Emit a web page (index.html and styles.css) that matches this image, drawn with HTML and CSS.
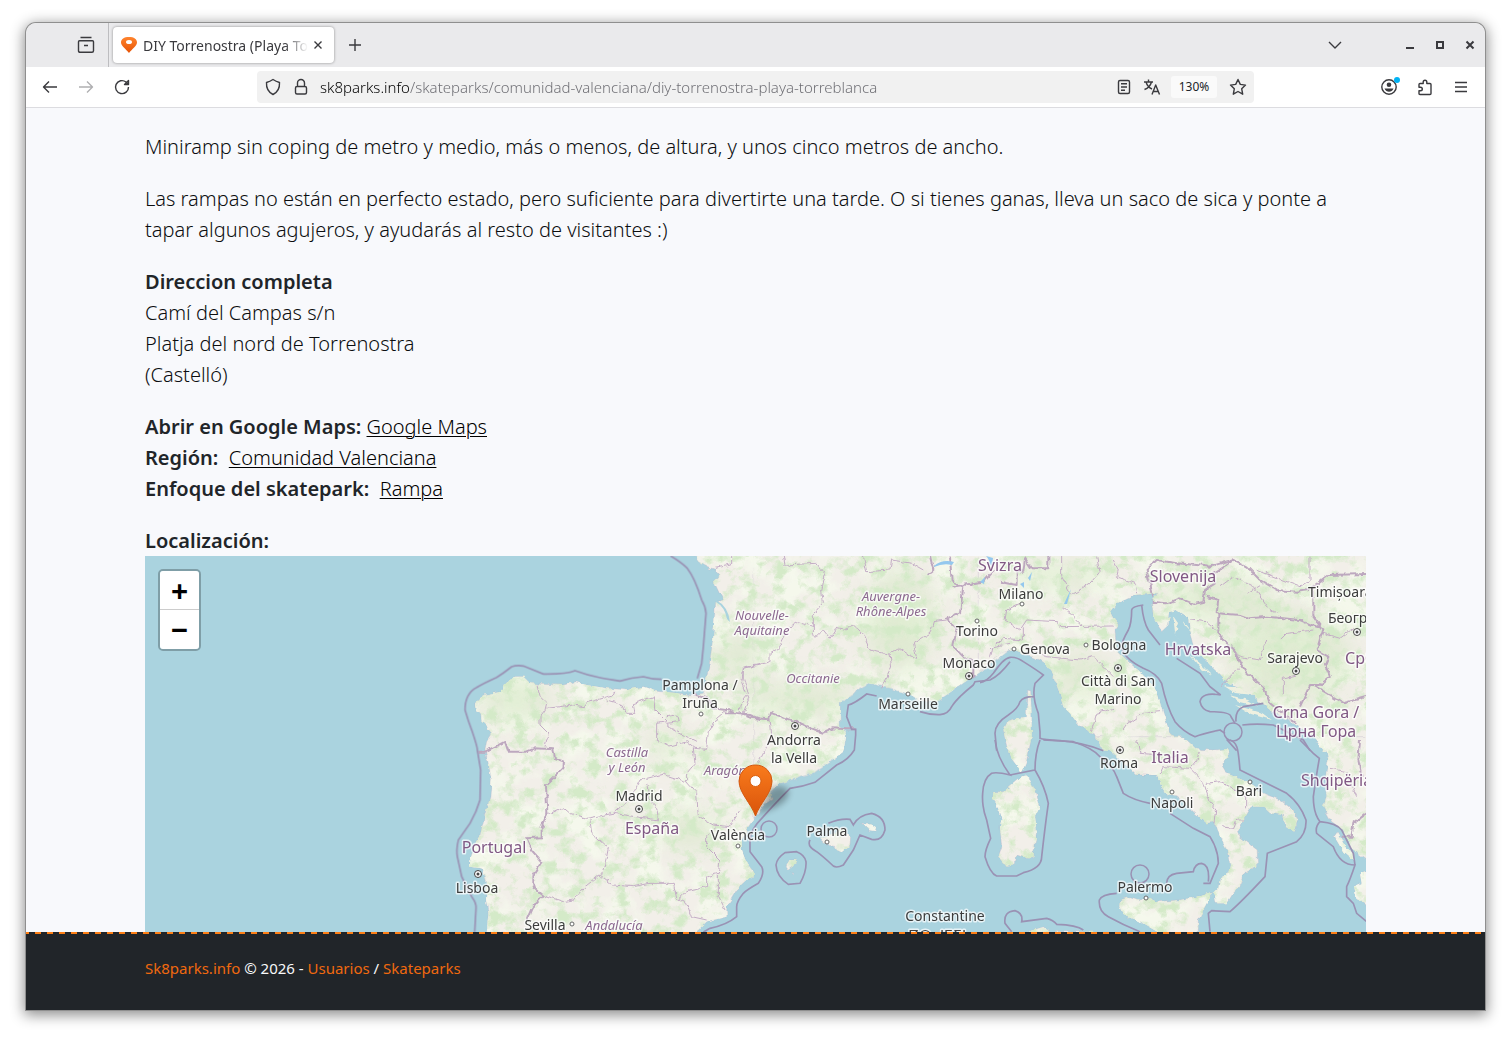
FILE: index.html
```html
<!DOCTYPE html>
<html lang="es">
<head>
<meta charset="utf-8">
<meta name="viewport" content="width=device-width, initial-scale=1">
<title>DIY Torrenostra (Playa Torreblanca)</title>
<link rel="stylesheet" href="styles.css">
</head>
<body>
<div class="window">
  <header class="tabbar">
    <button class="icon-btn recent" aria-label="Firefox View"><svg width="18" height="18" viewBox="0 0 18 18"><path d="M3.500 1.500h11M2.500 4.800h13q1 0 1 1v9q0 1.500-1.500 1.500H3q-1.500 0-1.500-1.500v-9q0-1 1-1zM7 9.500h4"/></svg></button>
    <div class="tab">
      <svg class="favicon" width="18" height="18" viewBox="0 0 18 18"><defs><linearGradient id="fav" x2="0" y2="1"><stop stop-color="#ff842e"/><stop offset="1" stop-color="#e65305"/></linearGradient></defs><path fill="url(#fav)" d="M9 1C14 1 17 3 17 6.500C17 10 12 13 9 17C6 13 1 10 1 6.500C1 3 4 1 9 1z"/><ellipse cx="9" cy="6" rx="3" ry="2" fill="#fff"/></svg>
      <span class="tab-title">DIY Torrenostra (Playa Torreblanca)</span>
      <button class="icon-btn tab-close" aria-label="Cerrar pestaña"><svg width="10" height="10" viewBox="0 0 10 10"><path d="M1.500 1.500l7 7M8.500 1.500l-7 7"/></svg></button>
    </div>
    <button class="icon-btn new-tab" aria-label="Nueva pestaña"><svg width="14" height="14" viewBox="0 0 14 14"><path d="M7 1v12M1 7h12"/></svg></button>
    <button class="icon-btn tab-list" aria-label="Listar pestañas"><svg width="14" height="14" viewBox="0 0 14 14"><path d="M1 4l6 6 6-6"/></svg></button>
    <div class="window-controls">
      <button class="icon-btn" aria-label="Minimizar"><svg width="10" height="10" viewBox="0 0 10 10"><path d="M1 8h8"/></svg></button>
      <button class="icon-btn" aria-label="Maximizar"><svg width="10" height="10" viewBox="0 0 10 10"><path d="M2 2h6v6H2z"/></svg></button>
      <button class="icon-btn" aria-label="Cerrar"><svg width="10" height="10" viewBox="0 0 10 10"><path d="M1.500 1.500l7 7M8.500 1.500l-7 7"/></svg></button>
    </div>
  </header>
  <nav class="toolbar" aria-label="Navegación">
    <div class="nav-buttons">
      <button class="icon-btn" aria-label="Atrás"><svg width="18" height="18" viewBox="0 0 18 18"><path d="M16 9H2.500M8 3.500L2.500 9 8 14.500"/></svg></button>
      <button class="icon-btn" aria-label="Adelante" disabled><svg width="18" height="18" viewBox="0 0 18 18"><path d="M2 9h13.500M10 3.500l5.500 5.500-5.500 5.500"/></svg></button>
      <button class="icon-btn" aria-label="Recargar"><svg width="18" height="18" viewBox="0 0 18 18"><path d="M15.500 9A6.500 6.500 0 1 1 13 4l2 2M15.500 2.500v4h-4z"/></svg></button>
    </div>
    <div class="urlbar">
      <svg width="18" height="18" viewBox="0 0 18 18"><path d="M9 1.500Q12 3.500 15.500 4.500Q16 13 9 16.500Q2 13 2.500 4.500Q6 3.500 9 1.500z"/></svg>
      <svg width="18" height="18" viewBox="0 0 18 18"><path d="M5.500 8V5a3.500 3.500 0 0 1 7 0v3M5 8.500h8q1.500 0 1.500 1.500v4.500q0 1.500-1.500 1.500H5q-1.500 0-1.500-1.500V10q0-1.500 1.500-1.500z"/></svg>
      <input class="url" type="text" aria-label="Dirección" value="sk8parks.info/skateparks/comunidad-valenciana/diy-torrenostra-playa-torreblanca">
      <button class="icon-btn" aria-label="Modo lectura"><svg width="18" height="18" viewBox="0 0 18 18"><path d="M5 2.500h8q1.500 0 1.500 1.500v10q0 1.500-1.500 1.500H5q-1.500 0-1.500-1.500V4q0-1.500 1.500-1.500zM6 5.700h6M6 9h6M6 12.200h4"/></svg></button>
      <button class="icon-btn" aria-label="Traducir"><svg width="18" height="18" viewBox="0 0 18 18"><path d="M1 4h9M5.500 1.500V4M8.500 4Q7 9.500 1.500 11.500M3 4Q4.500 9 9 11M9 16.500l3.700-9.500 3.800 9.500M10.200 13.500h5"/></svg></button>
      <button class="zoom-level">130%</button>
      <button class="icon-btn" aria-label="Añadir a marcadores"><svg width="18" height="18" viewBox="0 0 18 18"><path d="M9 1.500l2.300 4.900 5.200.7-3.800 3.700 1 5.400L9 13.500l-4.700 2.700 1-5.400L1.500 7.100l5.200-.7z"/></svg></button>
    </div>
    <div class="tools">
      <button class="icon-btn account" aria-label="Cuenta"><svg width="18" height="18" viewBox="0 0 18 18"><circle cx="9" cy="9" r="7.200"/><circle class="solid" cx="9" cy="6.700" r="2.300"/><path class="solid" d="M4.500 10.500h9Q12 13.800 9 13.800T4.500 10.500z"/><circle class="badge" cx="17" cy="2" r="3"/></svg></button>
      <button class="icon-btn" aria-label="Extensiones"><svg width="18" height="18" viewBox="0 0 18 18"><path d="M3 6.500q0-1 1-1h3.200V4a1.800 1.800 0 0 1 3.600 0v1.500H14q1 0 1 1v9q0 1-1 1H4q-1 0-1-1v-2.700h1.500a1.800 1.800 0 0 0 0-3.600H3z"/></svg></button>
      <button class="icon-btn" aria-label="Menú"><svg width="18" height="18" viewBox="0 0 18 18"><path d="M3 4.500h12M3 9h12M3 13.500h12"/></svg></button>
    </div>
  </nav>

  <main class="page">
    <p>Miniramp sin coping de metro y medio, más o menos, de altura, y unos cinco metros de ancho.</p>
    <p>Las rampas no están en perfecto estado, pero suficiente para divertirte una tarde. O si tienes ganas, lleva un saco de sica y ponte a tapar algunos agujeros, y ayudarás al resto de visitantes :)</p>
    <p><strong>Direccion completa</strong><br>Camí del Campas s/n<br>Platja del nord de Torrenostra<br>(Castelló)</p>
    <p><strong>Abrir en Google Maps:</strong> <a href="#mapa">Google Maps</a><br><strong>Región:</strong>&nbsp; <a href="#region">Comunidad Valenciana</a><br><strong>Enfoque del skatepark:</strong>&nbsp; <a href="#rampa">Rampa</a></p>
    <strong class="map-title">Localización:</strong>
    <section class="map" id="mapa" aria-label="Localización">
      <svg class="tiles" viewBox="145 556 1221 376" preserveAspectRatio="xMidYMid slice">
        <defs>
          <path id="land-a" transform="translate(440 550) scale(.33333)" d="M765 18L775 35 800 50 825 58 840 75 822 95 838 130 850 150 828 155 825 180 820 260 810 330 797 395 790 430 760 435 700 428 650 424 610 410 560 420 500 415 440 405 405 395 370 405 300 403 270 400 250 380 225 380 195 400 185 425 130 435 105 460 105 475 122 490 125 515 140 530 155 550 140 575 135 600 145 640 155 690 150 740 130 810 120 860 100 890 88 950 125 955 135 990 140 1010 138 1050 145 1090 140 1150 765 1150 800 1115 860 1100 860 1070 890 1020 945 970 920 940 905 900 905 870 925 830 947 800 965 780 965 0 765 0Z"/>
          <path id="land-b" transform="translate(690 550) scale(.33333)" d="M190 0V805L230 755 250 745 240 730 270 700 370 670 460 605 470 545 450 530 450 460 480 435 540 400 600 415 650 430 690 455 740 455 790 420 840 385 870 365 920 330 965 295V0Z"/>
          <path id="land-c" transform="translate(980 550) scale(.33333)" d="M-5 0V365L30 340 60 310 100 298 140 315 190 335 215 365 235 420 250 470 270 490 300 530 340 550 370 602H625L570 550 550 490 530 420 480 365 440 330 410 300 405 240 415 225 400 205 390 185 410 160 470 135 530 130 515 160 520 200 545 245 565 225 570 185 590 180 625 205 630 250 640 290 690 345 740 395 820 440 870 480 940 520 1000 560 1032 602H1165V0Z"/>
          <path id="land-d" transform="translate(980 740) scale(.33333)" d="M348 -10L355 0 385 30 440 75 470 105 530 105 545 140 560 165 590 170 610 185 640 215 680 250 705 245 720 290 740 330 750 375 745 400 720 415 715 445 700 460 705 490 740 490 760 460 780 440 790 400 832 378 832 330 780 290 775 270 790 240 815 200 850 200 870 220 910 225 915 260 943 275 953 240 940 210 900 180 850 160 800 125 740 100 725 75 748 40 740 28 700 30 650 28 610 -10ZM1030 -10L1045 60 1035 120 1040 170 1030 200 1055 245 1090 270 1100 300 1130 340 1165 365V-10Z
            M130 105L150 120 170 160 180 200 165 230 170 270 160 355 140 355 110 345 105 375 80 380 55 350 65 320 60 260 65 240 50 195 38 180 40 155 70 155 100 130Z
            M420 480L450 470 480 480 500 470 530 485 600 480 650 470 697 455 680 490 655 540 655 580H540L480 545 430 525 418 500ZM130 580L190 560 210 575ZM200 575H340V585H200Z
            M1060 285L1075 280 1090 310 1120 345 1125 365 1090 335ZM1140 400L1165 390V500L1125 470 1120 440 1145 430Z"/>
          <path id="islands" transform="translate(690 550) scale(.33333)" d="M1010 420L1022 422 1025 500 1025 560 1010 635 995 665 960 620 945 570 940 540 950 520 985 505 1010 500ZM390 868L430 850 465 835 482 860 480 885 455 907 440 900 435 890 410 885ZM515 820L540 820 558 832 555 843 535 840ZM285 945L305 930 320 930 310 948 295 960ZM303 965L312 968 308 978Z"/>
          <path id="dalmatia" d="M1173 616L1178 623 1176 634 1180 641 1175 632ZM1182 620L1191 632 1185 626ZM1190 655L1202 665 1212 675 1200 668ZM1224 686L1240 688 1252 695 1235 693ZM1229 695L1248 700 1258 706 1240 702ZM1235 705L1262 713 1272 720 1250 714Z"/>
          <clipPath id="land-clip"><use href="#land-a"/><use href="#land-b"/><use href="#land-c"/><use href="#land-d"/><use href="#islands"/></clipPath>
          <filter id="ragged" x="0" y="0" width="100%" height="100%"><feTurbulence type="fractalNoise" baseFrequency=".16" numOctaves="2" seed="4"/><feDisplacementMap in="SourceGraphic" scale="5" xChannelSelector="R" yChannelSelector="G"/></filter>
          <filter id="forest" x="0" y="0" width="100%" height="100%"><feTurbulence type="fractalNoise" baseFrequency=".07 .08" numOctaves="5" seed="11"/><feColorMatrix values="0 0 0 0 .66  0 0 0 0 .82  0 0 0 0 .58  0 4 0 0 -1.850"/></filter>
          <filter id="meadow" x="0" y="0" width="100%" height="100%"><feTurbulence type="fractalNoise" baseFrequency=".03" numOctaves="4" seed="7"/><feColorMatrix values="0 0 0 0 .91  0 0 0 0 .94  0 0 0 0 .84  4 0 0 0 -1.750"/></filter>
          <filter id="soft"><feGaussianBlur stdDeviation="12"/></filter>
          <filter id="shade" x="-50%" y="-50%" width="200%" height="200%"><feGaussianBlur stdDeviation="3"/></filter>
          <linearGradient id="pin" x2="0" y2="1"><stop stop-color="#f97b1c"/><stop offset="1" stop-color="#d9540b"/></linearGradient>
        </defs>
        <rect class="sea" x="145" y="556" width="1221" height="376"/>
        <g filter="url(#ragged)">
          <g class="coast"><use href="#land-a"/><use href="#land-b"/><use href="#land-c"/><use href="#land-d"/><use href="#islands"/></g>
          <g clip-path="url(#land-clip)">
            <rect x="440" y="550" width="930" height="390" filter="url(#meadow)"/>
            <g class="woods" filter="url(#soft)"><ellipse cx="515" cy="700" rx="36" ry="20"/><ellipse cx="738" cy="655" rx="22" ry="22"/><ellipse cx="900" cy="620" rx="35" ry="50"/><ellipse cx="800" cy="700" rx="60" ry="16"/><ellipse cx="665" cy="745" rx="18" ry="14"/><ellipse cx="1060" cy="575" rx="50" ry="12"/><ellipse cx="1220" cy="600" rx="55" ry="20"/><ellipse cx="1290" cy="655" rx="60" ry="45"/><ellipse cx="1080" cy="675" rx="30" ry="20"/><ellipse cx="690" cy="830" rx="30" ry="18"/></g>
            <rect x="440" y="550" width="930" height="390" filter="url(#forest)"/>
          </g>
          <use href="#dalmatia" class="isles"/>
          <g class="borders" transform="translate(440 550) scale(.33333)">
            <path d="M290 403L300 440 320 460 315 480 300 500 300 525 325 550 315 590M320 475L400 465 430 470 440 458 520 435 525 425M500 450L550 465 560 490 585 490 580 460 640 440 645 480 680 515 650 520 650 570 690 588 740 575 765 595 800 598 805 545 830 505 860 480M680 500L710 495 715 515 680 520 700 540 770 575M760 595L765 640 740 670 740 695M575 740L600 690 670 673 740 695 770 730 775 800 820 825 870 830 900 780M320 795L370 773 390 790 440 805 520 790 575 740M520 790L655 810 650 770 630 755 620 700M450 810L455 850 505 895 500 920 485 975M310 1035L370 1055 400 1050 435 1010 480 975 520 1005 580 1010 630 1000 700 1000 710 1045 740 1060 755 1100 800 1110M830 830L800 860 800 890 840 930 835 970 800 980 800 1010 740 1025 715 1050M835 975L835 1040 855 1080M905 500L925 450 905 400 910 355 960 345"/>
            <path class="national" d="M112 605H135L195 575 205 605 260 605 285 595 340 598 345 625 372 635 370 655 318 705 322 790 305 830 305 862 260 865 275 900 305 935 280 975 280 1010 308 1035 275 1075 260 1110M760 432L800 445 820 475 860 480 890 492 930 495 960 507"/>
          </g>
          <g class="borders" transform="translate(690 550) scale(.33333)">
            <path d="M125 18L125 45 75 55M280 18L285 45 380 40 405 75 395 120 400 160 370 195 370 250 375 265 400 240 420 265 440 235 460 240 490 228 520 255 540 300 580 310 600 312 605 350 575 415M370 230L325 215 300 230 265 295 240 310 240 335 160 355 160 385 175 430 155 455 150 490M520 18L530 65 600 60 605 30 665 40 700 60M600 312L625 295 655 315 680 325 670 280 720 250 730 215 770 210M240 500L245 560 205 640M900 325L910 290 960 280"/>
            <path class="national" d="M105 490L150 490 180 503 235 508 240 488 330 520 350 530 400 548 430 535 470 538 497 538M780 20L785 95 820 110 815 150 810 190 770 205 800 235 790 290 825 325 850 330 850 385M720 18L730 60 710 75M785 110L820 105 880 95 910 60"/>
          </g>
          <g class="borders" transform="translate(980 550) scale(.33333)">
            <path d="M245 18L245 80 275 135 330 100 360 65 350 20M400 30L415 60 410 80 465 100 470 130M120 160L80 180 75 210 120 240 140 210 230 215 240 230 400 228M250 170L305 225M30 300L70 265 130 270 130 235M130 285L200 320 300 330 340 320 400 380M540 485L490 490 440 525 430 540M335 540L350 490 400 475M630 210L680 215 710 240M720 110L760 80 820 110 860 170 890 190M800 130L850 100M900 270L920 250 1000 240M720 260L780 320 840 330 860 270M780 350L720 410M830 60L960 110 990 90V20M910 430V385L950 375M1030 250L1080 265 1120 235"/>
            <path class="national" d="M60 95L110 105 110 60 130 65 135 25 155 55 205 55 205 18M520 140L510 100 500 60 530 30 590 40 650 45 690 50 760 28 800 50 840 90 890 120 950 125 985 120 1045 75 1160 72M515 155L560 160 600 145 640 162 670 155 675 120 705 100 700 70 760 30M680 140L715 150 710 190 780 195 810 205 860 200 910 205 960 210 995 225 1030 235 1010 300 1045 320 1035 345 1050 380 1020 405 990 405 960 470M715 195V250L760 300 800 370 850 410 870 460 920 500 950 520M1000 405L1090 460 1160 440M1045 75L1000 110V200L1025 235"/>
          </g>
          <g class="borders" transform="translate(980 740) scale(.33333)">
            <path d="M540 100L550 80 630 85 650 60 660 30M470 0L480 40 540 45 590 50M630 85L670 125 690 185 710 210 705 250M680 130L720 125 770 150 800 170V205M720 260L760 265 770 240 790 240M1050 85L1100 95 1130 170"/>
            <path class="national" d="M1160 220L1120 250 1115 290 1085 290M1140 0L1135 60 1145 110"/>
          </g>
        </g>
        <path class="lakes" d="M934 566q8-7 20-4l-2 3q-9-2-18 2zM986 556q4 4 3 8l3 2 1-8zM980 582l5-5-1 7zM1064 604l7-15-4 15zM1028 578l4-6-2 9zM1020 584l4-2v6z"/>
        <path class="sea" d="M716 600q12 6 14 22l-3-3q-2-12-11-17z"/>
        <g class="waters">
          <path transform="translate(440 550) scale(.33333)" d="M692 18Q725 38 742 55Q765 85 785 150Q797 170 798 190L790 290 785 340 772 385M665 388Q635 388 610 380Q575 382 540 393Q500 387 480 383Q440 375 405 362Q380 373 310 372Q280 360 250 348Q230 345 215 350Q190 370 170 382Q130 400 110 412Q75 430 75 480Q85 515 95 540Q112 590 112 600L122 660 120 750Q110 785 90 820L55 870Q48 900 52 920L65 980 95 1040Q110 1060 108 1075L104 1146"/>
          <path transform="translate(690 550) scale(.33333)" d="M560 438L530 432Q495 460 475 465L470 500 485 538H497V555L493 600Q475 630 440 645L375 697Q340 710 300 715Q260 755 220 800Q180 840 180 870V905L215 950Q225 970 205 1000Q170 1020 160 1030Q140 1055 140 1070V1100Q110 1125 60 1135L40 1146M415 820Q450 805 480 808L490 825Q505 795 545 790Q585 800 585 840Q575 875 545 868L510 855 490 900 460 945Q440 955 430 948Q400 920 380 905Q350 890 360 870M285 908L320 905Q345 915 348 935Q350 965 330 1000L295 1003Q260 980 258 945Q260 925 285 908zM690 485Q720 495 750 494Q775 492 785 470Q800 445 850 405L855 395 900 390Q930 375 960 335"/>
          <circle cx="769" cy="829" r="8"/><circle cx="1233" cy="732" r="9"/><circle cx="1140" cy="874" r="9"/>
          <path transform="translate(980 550) scale(.33333)" d="M0 398Q20 395 40 370Q70 325 90 322Q110 320 130 335Q170 360 190 375L165 400Q155 440 175 490L180 545 180 565Q190 570 240 572Q310 578 370 602M160 440Q130 440 120 455Q115 475 85 495Q45 520 45 550L50 602M490 165Q455 170 455 180Q455 220 445 240Q425 275 425 290Q430 325 490 355Q530 370 545 400Q560 470 585 515Q610 545 645 560Q670 550 720 540L735 550M485 165Q490 215 505 240L540 285M590 325L660 370 690 410 722 435Q665 425 660 455Q665 480 690 485Q750 485 753 500L765 520M787 525Q830 520 880 525Q930 550 970 570L990 602M740 568L770 602M768 515Q765 480 790 470L850 460"/>
          <path transform="translate(980 740) scale(.33333)" d="M45 0Q50 50 90 105Q50 95 35 100Q10 115 8 160Q5 200 20 240L32 295Q15 330 15 350Q30 400 50 408H110L130 398Q185 385 185 350Q195 260 205 190Q195 140 165 90L90 105M180 0Q165 40 165 90M190 0L280 5Q340 25 360 50Q400 80 410 110L430 160Q460 180 510 190M570 220L640 265 690 290Q715 330 715 370L690 430H670M560 430Q560 405 590 400L640 395Q645 370 665 370Q690 375 685 425M410 460Q365 463 358 480Q355 515 385 530Q430 555 480 575M690 575L685 520 695 512 750 515Q780 490 855 410L862 340 950 305Q980 280 978 240Q960 190 920 160L780 90Q775 30 770 20Q765 5 750 0M960 0L1000 40 1018 55Q1010 100 1000 170Q1000 220 1020 245Q1005 260 1010 280L1060 320Q1080 375 1125 375Q1110 420 1100 440V470L1120 490 1130 520 1160 545M1020 245Q1070 250 1085 270L1120 340 1125 375M95 575L75 550Q70 515 105 512Q130 520 125 545L200 535Q220 540 230 553Q290 555 310 570"/>
        </g>
        <g class="label places">
          <text x="1021" y="599">Milano</text><text x="977" y="636">Torino</text><text x="1045" y="654">Genova</text><text x="1119" y="650">Bologna</text><text x="969" y="668">Monaco</text><text x="908" y="709">Marseille</text><text x="700" y="690">Pamplona /</text><text x="700" y="708">Iruña</text><text x="794" y="745">Andorra</text><text x="794" y="763">la Vella</text><text x="639" y="801">Madrid</text><text x="738" y="840">València</text><text x="827" y="836">Palma</text><text x="477" y="893">Lisboa</text><text x="545" y="930">Sevilla</text><text x="945" y="921">Constantine</text><text x="942" y="940">ⵇⵙⴰⵏⵟⵉⵏⴰ</text><text x="1118" y="686">Città di San</text><text x="1118" y="704">Marino</text><text x="1119" y="768">Roma</text><text x="1172" y="808">Napoli</text><text x="1249" y="796">Bari</text><text x="1145" y="892">Palermo</text><text x="1295" y="663">Sarajevo</text><text class="from-left" x="1308" y="597">Timișoara</text><text class="from-left" x="1328" y="623">Београд</text>
        </g>
        <g class="label countries"><text x="1000" y="571">Svizra</text><text x="1183" y="582">Slovenija</text><text x="1198" y="655">Hrvatska</text><text class="from-left" x="1345" y="664">Србија</text><text x="1316" y="718">Crna Gora /</text><text x="1316" y="737">Црна Гора</text><text x="1170" y="763">Italia</text><text class="from-left" x="1301" y="786">Shqipëria</text><text x="652" y="834">España</text><text x="494" y="853">Portugal</text></g>
        <g class="label regions"><text x="762" y="620">Nouvelle-</text><text x="762" y="635">Aquitaine</text><text x="891" y="601">Auvergne-</text><text x="891" y="616">Rhône-Alpes</text><text x="813" y="683">Occitanie</text><text x="627" y="757">Castilla</text><text x="627" y="772">y León</text><text x="725" y="775">Aragón</text><text x="614" y="930">Andalucía</text></g>
        <g class="towns"><circle cx="1022" cy="604" r="2"/><circle cx="977" cy="621" r="2"/><circle cx="1014" cy="649" r="2"/><circle cx="1086" cy="645" r="2"/><circle cx="908" cy="694" r="2"/><circle cx="701" cy="714" r="2"/><circle cx="738" cy="846" r="2"/><circle cx="827" cy="842" r="2"/><circle cx="572" cy="924" r="2"/><circle cx="1172" cy="792" r="2"/><circle cx="1250" cy="782" r="2"/><circle cx="1146" cy="898" r="2"/></g>
        <g class="capitals"><circle cx="969" cy="676" r="3.500"/><circle cx="795" cy="726" r="3.500"/><circle cx="639" cy="809" r="3.500"/><circle cx="478" cy="874" r="3.500"/><circle cx="1118" cy="668" r="3.500"/><circle cx="1120" cy="750" r="3.500"/><circle cx="1296" cy="671" r="3.500"/><circle cx="1357" cy="632" r="3.500"/></g>
        <g class="dots"><circle cx="969" cy="676" r="1.500"/><circle cx="795" cy="726" r="1.500"/><circle cx="639" cy="809" r="1.500"/><circle cx="478" cy="874" r="1.500"/><circle cx="1118" cy="668" r="1.500"/><circle cx="1120" cy="750" r="1.500"/><circle cx="1296" cy="671" r="1.500"/><circle cx="1357" cy="632" r="1.500"/></g>
        <path class="pin-shadow" filter="url(#shade)" d="M757 815L768 791Q777 782 788 789Q791 799 776 807Z"/>
        <path class="pin" d="M755.500 816C751 803 739 793 739 781A16.500 16 0 0 1 772 781C772 793 760 803 755.500 816Z"/>
        <circle cx="755.500" cy="781" r="5.500" fill="#fff" stroke="#d8600f"/>
      </svg>
      <div class="zoom"><button aria-label="Acercar">+</button><button aria-label="Alejar">−</button></div>
    </section>
  </main>
  <footer class="footer"><a href="#inicio">Sk8parks.info</a> © 2026 - <a href="#usuarios">Usuarios</a> / <a href="#skateparks">Skateparks</a></footer>
</div>
</body>
</html>
```
FILE: styles.css
```css
* { box-sizing: border-box; }
body {
  margin: 0;
  min-height: 100vh;
  display: flex;
  padding: 23px 26px 29px;
  background: #fff;
  color: #212529;
  font-family: "Noto Sans", sans-serif;
}
.window {
  flex: 1;
  min-width: 0;
  display: flex;
  flex-direction: column;
  border-radius: 10px 10px 0 0;
  box-shadow: 0 0 0 1px #8f8f8f, 0 3px 14px 2px rgba(0, 0, 0, .45);
}
button { font: inherit; color: inherit; border: 0; padding: 0; background: none; }
svg { display: block; }
.icon-btn { display: grid; place-items: center; flex: none; }
.icon-btn svg, .urlbar > svg { fill: none; stroke: #3a3a3e; stroke-width: 1.4; flex: none; overflow: visible; stroke-linejoin: round; }

.tabbar { display: flex; align-items: center; height: 44px; background: #eaeaec; border-radius: 10px 10px 0 0; }
.recent { width: 83px; height: 44px; padding-left: 37px; border-right: 1px solid #bdbdc0; }
.tab {
  display: flex;
  align-items: center;
  width: 221px;
  height: 36px;
  margin-left: 4px;
  padding: 0 11px 0 7px;
  background: #fff;
  border-radius: 4px;
  box-shadow: 0 0 3px rgba(0, 0, 0, .4);
}
.favicon { flex: none; margin-right: 5px; }
.tab-title {
  flex: 1;
  overflow: hidden;
  white-space: nowrap;
  color: #3a3a3e;
  font-size: 14px;
  mask-image: linear-gradient(to left, transparent, #000 24px);
}
.tab-close { width: 10px; margin-left: 5px; }
.new-tab { margin-left: 14px; }
.tab-list { margin-left: auto; }
.window-controls { display: flex; gap: 20px; margin: 0 10px 0 63px; }
.window-controls svg { stroke-width: 2; stroke-linejoin: miter; }

.toolbar { display: flex; align-items: center; height: 41px; background: #fff; border-bottom: 1px solid #dcdce0; }
.nav-buttons { display: flex; gap: 18px; padding-left: 15px; flex: 1 0 231px; }
.nav-buttons button:disabled { opacity: .4; }
.urlbar {
  display: flex;
  align-items: center;
  flex: 0 1 997px;
  min-width: 0;
  height: 32px;
  gap: 10px;
  padding: 0 7px;
  background: #f1f1f1;
  border-radius: 4px;
}
.url {
  flex: 1;
  min-width: 0;
  border: 0;
  padding: 0;
  font: 300 15px "Noto Sans", sans-serif;
  color: transparent;
  background: linear-gradient(90deg, #000 90px, #6a6a70 90px);
  background-clip: text;
}
.zoom-level { width: 46px; height: 22px; margin-right: 2px; background: #fafafa; border-radius: 3px; font-size: 12px; line-height: 22px; }
.tools { display: flex; justify-content: flex-end; align-items: center; gap: 18px; padding-right: 15px; flex: 1 0 231px; }
.account .solid { fill: #3a3a3e; stroke: none; }
.account .badge { fill: #00b3f4; stroke: none; }

.page {
  flex: 1;
  display: flex;
  flex-direction: column;
  padding: 23px 119px 0;
  background: #f8f9fc;
  color: #0c0e10;
  font-size: 20px;
  font-weight: 300;
  line-height: 31px;
}
.page p { margin: 0 0 21px; }
.page strong { font-weight: 600; color: #212529; }
.page a { color: #000; text-underline-offset: 2px; text-decoration-thickness: 1px; }

.map { flex: 1; display: grid; min-height: 376px; overflow: hidden; }
.map > * { grid-area: 1 / 1; }
.tiles { width: 100%; height: 100%; font-weight: 400; }
.sea { fill: #aad3df; }
.coast { fill: #f2efe9; stroke: #b8aec4; stroke-width: 1; }
.isles { fill: #eef0e0; }
.woods { fill: #d3e6c2; opacity: .6; }
.borders path { fill: none; stroke: #c4adc6; stroke-width: 3; stroke-linejoin: round; }
.borders .national { stroke-width: 6; stroke: #bda8bf; }
.waters { fill: none; stroke: #9a92b4; stroke-width: 1.5; }
.waters path { stroke-width: 5; }
.lakes { fill: #94c8ee; }
.label { text-anchor: middle; paint-order: stroke; stroke: rgba(255, 255, 255, .7); stroke-width: 3px; stroke-linejoin: round; }
.from-left { text-anchor: start; }
.places { font-size: 14px; fill: #3c3c3c; }
.countries { font-size: 16px; fill: #805884; }
.regions { font-size: 13px; font-style: italic; fill: #8c6990; }
.towns { fill: #fff; stroke: #666; stroke-width: 1; }
.capitals { fill: #fff; stroke: #444; stroke-width: 1; }
.dots { fill: #444; }
.pin { fill: url(#pin); stroke: #d2570e; stroke-width: 1; }
.pin-shadow { fill: #000; opacity: .3; }
.zoom {
  align-self: start;
  justify-self: start;
  display: grid;
  width: 43px;
  margin: 13px;
  border: 2px solid rgba(0, 0, 0, .25);
  border-radius: 5px;
  background-clip: padding-box;
  z-index: 1;
}
.zoom button { height: 39px; background: #fff; color: #000; font-size: 30px; line-height: 39px; font-weight: 700; }
.zoom button:first-child { border-bottom: 1px solid #ccc; border-radius: 3px 3px 0 0; }
.zoom button:last-child { border-radius: 0 0 3px 3px; }

.footer {
  height: 78px;
  padding: 23px 119px;
  background: repeating-linear-gradient(90deg, #fd7e14 0 3px, #212529 3px 9px, #fd7e14 9px 12px) top / 100% 2px no-repeat #212529;
  color: #f8f9fa;
  font-size: 15px;
  line-height: 26px;
}
.footer a { color: #f0690f; text-decoration: none; }
```
